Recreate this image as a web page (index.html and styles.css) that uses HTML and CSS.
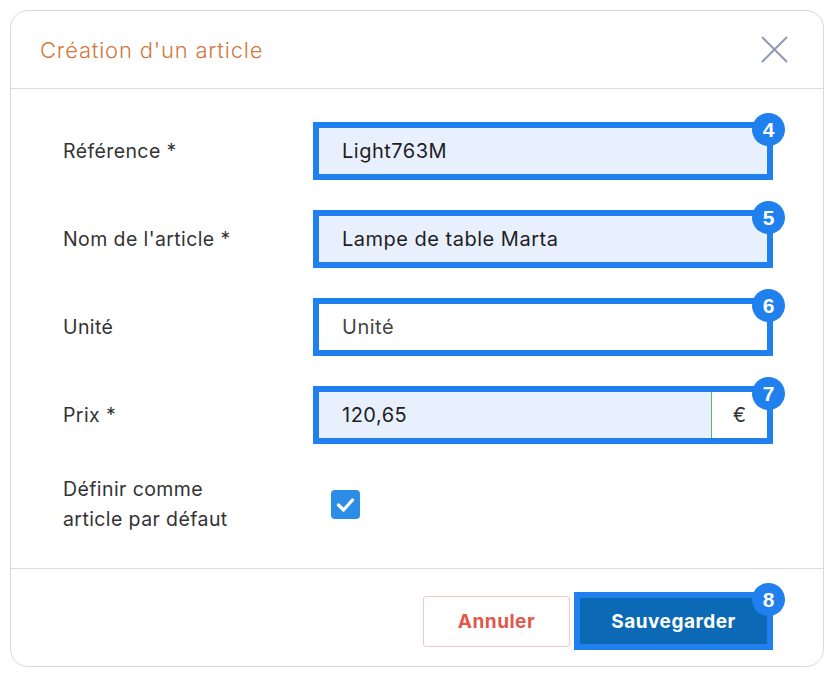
FILE: index.html
```html
<!DOCTYPE html>
<html lang="fr">
<head>
  <meta charset="UTF-8">
  <meta name="viewport" content="width=device-width, initial-scale=1.0">
  <title>Création d'un article</title>
  <link rel="stylesheet" href="styles.css">
</head>
<body>
  <div class="modal">
    <header class="modal-head">
      <h2>Création d'un article</h2>
      <button class="close" type="button" aria-label="Fermer">
        <svg width="27" height="27" viewBox="0 0 27 27">
          <path d="M1 1 L26 26 M26 1 L1 26" stroke="#8e9bb7" stroke-width="2" fill="none"/>
        </svg>
      </button>
    </header>

    <form class="modal-body">
      <label class="lbl">Référence *</label>
      <div class="mark">
        <input class="field filled" type="text" value="Light763M">
        <span class="step">4</span>
      </div>

      <label class="lbl">Nom de l'article *</label>
      <div class="mark">
        <input class="field filled" type="text" value="Lampe de table Marta">
        <span class="step">5</span>
      </div>

      <label class="lbl">Unité</label>
      <div class="mark">
        <input class="field" type="text" placeholder="Unité">
        <span class="step">6</span>
      </div>

      <label class="lbl">Prix *</label>
      <div class="mark">
        <div class="group">
          <input class="field filled" type="text" value="120,65">
          <span class="addon">€</span>
        </div>
        <span class="step">7</span>
      </div>

      <label class="lbl two-lines">Définir comme<br>article par défaut</label>
      <div class="check-wrap">
        <span class="check">
          <svg width="29" height="29" viewBox="0 0 29 29">
            <path d="M7.5 15 L12.5 20 L21.5 10" stroke="#fff" stroke-width="3.2" fill="none" stroke-linecap="round" stroke-linejoin="round"/>
          </svg>
        </span>
      </div>
    </form>

    <footer class="modal-foot">
      <button class="btn cancel" type="button">Annuler</button>
      <div class="mark">
        <button class="btn save" type="button">Sauvegarder</button>
        <span class="step">8</span>
      </div>
    </footer>
  </div>
</body>
</html>
```

FILE: styles.css
```css
* {
  margin: 0;
  padding: 0;
  box-sizing: border-box;
}

body {
  font-family: 'Inter', 'Open Sans', sans-serif;
  background: #fff;
  color: #333;
}

.modal {
  margin: 10px;
  border: 1px solid #d9d9d9;
  border-radius: 18px;
  background: #fff;
}

.modal-head {
  height: 78px;
  display: flex;
  align-items: center;
  justify-content: space-between;
  padding: 0 35px 0 29px;
  border-bottom: 1px solid #dcdcdc;
}

.modal-head h2 {
  font-size: 22px;
  font-weight: 300;
  letter-spacing: 0.8px;
  color: #d4773d;
}

.close {
  border: none;
  background: none;
  display: flex;
}

.modal-body {
  display: grid;
  grid-template-columns: 250px 460px;
  row-gap: 30px;
  align-items: center;
  padding: 33px 0 34px 52px;
  border-bottom: 1px solid #dcdcdc;
}

.lbl {
  font-size: 19.5px;
  letter-spacing: 0.4px;
  color: #333;
}

.lbl.two-lines {
  line-height: 30px;
}

/* blue highlight frame with numbered step */
.mark {
  position: relative;
  border: 6px solid #1f80ee;
  height: 58px;
  display: flex;
}

.step {
  position: absolute;
  top: -15px;
  right: -18px;
  width: 33px;
  height: 33px;
  border-radius: 50%;
  background: #1f80ee;
  color: #fff;
  font-family: 'Liberation Sans', Arial, sans-serif;
  font-weight: bold;
  font-size: 21px;
  display: flex;
  align-items: center;
  justify-content: center;
}

.field {
  flex: 1;
  min-width: 0;
  border: none;
  outline: none;
  padding-left: 23px;
  font-family: inherit;
  font-size: 20px;
  letter-spacing: 0.5px;
  color: #1e1e1e;
  background: #fff;
}

.field.filled {
  background: #e8f0fe;
}

.field::placeholder {
  color: #444;
}

.group {
  flex: 1;
  display: flex;
}

.addon {
  width: 56px;
  border-left: 1px solid #5cb85c;
  display: flex;
  align-items: center;
  justify-content: center;
  font-size: 20px;
  color: #333;
  background: #fff;
}

.check-wrap {
  padding-left: 18px;
  display: flex;
}

.check {
  width: 29px;
  height: 29px;
  border-radius: 4px;
  background: #2b8de6;
  display: flex;
}

.modal-foot {
  display: flex;
  justify-content: flex-end;
  align-items: center;
  gap: 4px;
  padding: 23px 50px 16px 0;
}

.btn {
  font-family: inherit;
  font-size: 19px;
  font-weight: 700;
  letter-spacing: 0.5px;
  cursor: pointer;
}

.cancel {
  width: 147px;
  height: 51px;
  background: #fff;
  border: 1px solid #f2c7c3;
  border-radius: 3px;
  color: #df584d;
}

.save {
  width: 187px;
  border: none;
  background: #0b69b5;
  color: #fff;
}
```
